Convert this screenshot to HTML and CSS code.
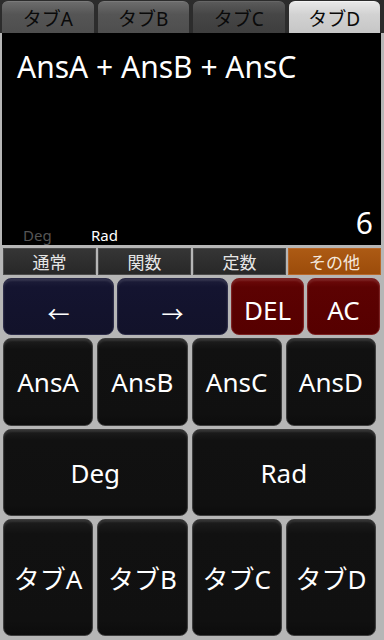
FILE: index.html
```html
<!DOCTYPE html>
<html lang="ja">
<head>
<meta charset="utf-8">
<link rel="stylesheet" href="styles.css">
</head>
<body>
<div class="app">
  <div class="tabs">
    <div class="tab">タブA</div>
    <div class="tab">タブB</div>
    <div class="tab tab-dark">タブC</div>
    <div class="tab tab-active">タブD</div>
  </div>
  <div class="display">
    <div class="expr">AnsA + AnsB + AnsC</div>
    <div class="display-bottom">
      <div class="modes"><span class="mode-off">Deg</span><span class="mode-on">Rad</span></div>
      <div class="result">6</div>
    </div>
  </div>
  <div class="labels">
    <div class="label">通常</div>
    <div class="label">関数</div>
    <div class="label">定数</div>
    <div class="label label-active">その他</div>
  </div>
  <div class="row row-nav">
    <div class="btn btn-blue">←</div>
    <div class="btn btn-blue">→</div>
    <div class="btn btn-red">DEL</div>
    <div class="btn btn-red">AC</div>
  </div>
  <div class="row row-four row-ans">
    <div class="btn">AnsA</div>
    <div class="btn">AnsB</div>
    <div class="btn">AnsC</div>
    <div class="btn">AnsD</div>
  </div>
  <div class="row row-two">
    <div class="btn">Deg</div>
    <div class="btn">Rad</div>
  </div>
  <div class="row row-four row-tabs">
    <div class="btn">タブA</div>
    <div class="btn">タブB</div>
    <div class="btn">タブC</div>
    <div class="btn">タブD</div>
  </div>
</div>
</body>
</html>
```
FILE: styles.css
```css
html, body {
  margin: 0;
  padding: 0;
}
body {
  width: 384px;
  height: 640px;
  background: #b6b6b6;
  font-family: "Noto Sans", "Open Sans", "Noto Sans CJK JP", sans-serif;
  overflow: hidden;
}
.app {
  display: flex;
  flex-direction: column;
  height: 640px;
}
.tabs {
  display: grid;
  grid-template-columns: repeat(4, 1fr);
  gap: 4px;
  padding: 1px 4px 0 2px;
  background: #2c2c2c;
  box-sizing: border-box;
  height: 33px;
}
.tab {
  display: flex;
  align-items: center;
  justify-content: center;
  border-radius: 6px 6px 0 0;
  background: linear-gradient(#6c6c6c, #555555 40%, #4e4e4e);
  border-top: 1px solid #7a7a7a;
  color: #0a0a0a;
  font-size: 19px;
  font-family: "Noto Sans", "Noto Sans CJK JP", sans-serif;
}
.tab-dark {
  background: linear-gradient(#5a5a5a, #464646 40%, #3e3e3e);
  border-top-color: #666;
}
.tab-active {
  background: linear-gradient(#e8e8e8, #d2d2d2 40%, #c6c6c6);
  border-top-color: #f4f4f4;
}
.display {
  margin: 0 3px 0 2px;
  height: 212px;
  background: #000;
  display: flex;
  flex-direction: column;
  justify-content: space-between;
  padding: 12px 8px 0 15px;
  box-sizing: border-box;
}
.expr {
  color: #fff;
  font-size: 30px;
  line-height: 44px;
}
.display-bottom {
  display: flex;
  justify-content: space-between;
  align-items: flex-end;
}
.modes {
  display: flex;
  gap: 8px;
  font-size: 15px;
  line-height: 20px;
  padding-left: 6px;
}
.mode-off {
  color: #555;
  width: 60px;
}
.mode-on {
  color: #fff;
}
.result {
  color: #fff;
  font-size: 30px;
  line-height: 36px;
  margin-bottom: 4px;
}
.labels {
  display: grid;
  grid-template-columns: repeat(4, 1fr);
  gap: 2px;
  height: 27px;
  margin: 3px 3px 0 3px;
}
.label {
  display: flex;
  align-items: center;
  justify-content: center;
  background: linear-gradient(#353535, #282828);
  border: 1px solid #4a4a4a;
  color: #e6e6e6;
  font-size: 17px;
  font-family: "Noto Sans CJK JP", sans-serif;
}
.label-active {
  background: linear-gradient(#ac5a14, #9c4c0a);
  border-color: #b8682a;
  color: #f4e8dc;
}
.row {
  display: grid;
  gap: 3px;
  margin-top: 3px;
  padding: 0 4px 0 3px;
}
.row-nav {
  grid-template-columns: 111px 111px 1fr 1fr;
  height: 57px;
}
.row-four {
  grid-template-columns: repeat(4, 1fr);
  gap: 4px;
  padding-right: 8px;
}
.row-two {
  grid-template-columns: repeat(2, 1fr);
  gap: 4px;
  padding-right: 8px;
  height: 87px;
}
.row-ans {
  height: 88px;
}
.row-tabs {
  height: 117px;
}
.btn {
  display: flex;
  align-items: center;
  justify-content: center;
  border-radius: 8px;
  background: linear-gradient(#1e1e1e, #111 12%, #101010 88%, #0c0c0c);
  border: 1px solid #3e3e3e;
  box-shadow: inset 0 2px 2px rgba(255, 255, 255, 0.1);
  color: #fff;
  font-size: 26px;
  font-family: "Noto Sans", "Noto Sans CJK JP", sans-serif;
}
.btn-blue {
  background: linear-gradient(#1e1e3a, #141430 15%, #12122a);
  border-color: #2c2c48;
  font-size: 22px;
  padding-top: 10px;
}
.btn-red {
  background: linear-gradient(#6e0a0a, #5c0202 15%, #560000);
  border-color: #7c2222;
  padding-top: 6px;
}
```
